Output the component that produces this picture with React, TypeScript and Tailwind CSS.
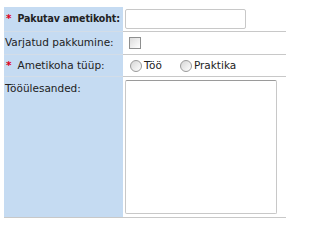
export default function App() {
  return (
    <div className="h-[220px] w-[286px] overflow-hidden bg-white pl-[4px] pt-[7px] font-['DejaVu_Sans',sans-serif] text-[10.5px] text-[#222]">
      <div className="grid grid-cols-[119px_1fr]">
        {/* row 1 */}
        <div className="flex h-[25px] items-center whitespace-nowrap border-b border-[#d3dde8] bg-[#c5dbf2] pl-[2px]">
          <span className="mr-[6px] font-bold text-[#e0001b]">*</span>
          <span className="font-['DejaVu_Sans_Condensed',sans-serif] text-[10.5px] font-bold tracking-[-0.1px]">
            Pakutav ametikoht:
          </span>
        </div>
        <div className="flex h-[25px] items-center border-b border-[#c8c8c8] pl-[2px]">
          <input
            type="text"
            className="h-[20px] w-[121px] rounded-[2px] border border-[#c8c8c8] bg-white"
          />
        </div>
        {/* row 2 */}
        <div className="flex h-[23px] items-center whitespace-nowrap border-b border-[#d3dde8] bg-[#c5dbf2] pl-[1px]">
          Varjatud pakkumine:
        </div>
        <div className="flex h-[23px] items-center border-b border-[#c8c8c8] pl-[6px]">
          <span className="block h-[12px] w-[12px] border border-[#8e8f8f] bg-gradient-to-br from-[#dcdcdc] to-[#ffffff]" />
        </div>
        {/* row 3 */}
        <div className="flex h-[22px] items-center whitespace-nowrap border-b border-[#d3dde8] bg-[#c5dbf2] pl-[2px]">
          <span className="mr-[6px] font-bold text-[#e0001b]">*</span>Ametikoha tüüp:
        </div>
        <div className="flex h-[22px] items-center border-b border-[#c8c8c8] pl-[7px]">
          <span className="block h-[12px] w-[12px] rounded-full border border-[#9a9a9a] bg-gradient-to-br from-[#d6d6d6] to-[#ffffff]" />
          <span className="ml-[2px]">Töö</span>
          <span className="ml-[18px] block h-[12px] w-[12px] rounded-full border border-[#9a9a9a] bg-gradient-to-br from-[#d6d6d6] to-[#ffffff]" />
          <span className="ml-[2px]">Praktika</span>
        </div>
        {/* row 4 */}
        <div className="h-[141px] border-b border-[#c8c8c8] bg-[#c5dbf2] pl-[1px] pt-[4px]">
          Tööülesanded:
        </div>
        <div className="h-[141px] border-b border-[#c8c8c8] pl-[2px] pt-[3px]">
          <textarea className="h-[134px] w-[152px] resize-none rounded-[2px] border border-[#c8c8c8] border-t-[#9a9a9a] bg-white" />
        </div>
      </div>
    </div>
  );
}
